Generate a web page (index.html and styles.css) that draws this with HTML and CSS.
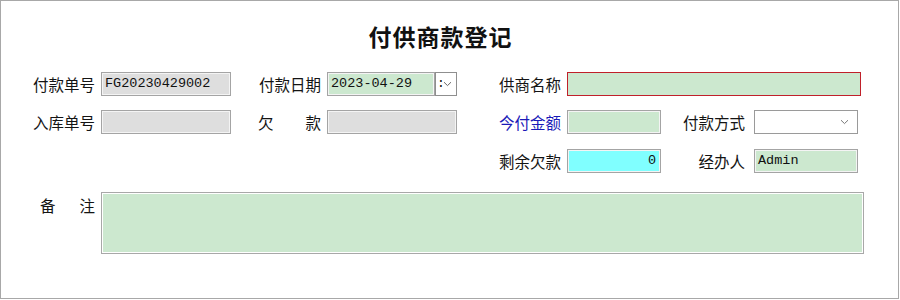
FILE: index.html
```html
<!DOCTYPE html>
<html lang="zh">
<head>
<meta charset="utf-8">
<title>付供商款登记</title>
<link rel="stylesheet" href="styles.css">
</head>
<body>
<div class="window">
  <div class="title">付供商款登记</div>
  <div class="form">
    <div class="row">
      <div class="lbl">付款单号</div>
      <div class="box grey w130">FG20230429002</div>
      <div class="lbl col2">付款日期</div>
      <div class="box green w108">2023-04-29</div>
      <div class="dropbtn"><span class="colon">:</span><svg width="9" height="6" viewBox="0 0 9 6"><path d="M1 1.2 L4.5 4.6 L8 1.2" fill="none" stroke="#666" stroke-width="1"/></svg></div>
      <div class="lbl w64 col3">供商名称</div>
      <div class="box green red w294"></div>
    </div>
    <div class="row r2">
      <div class="lbl">入库单号</div>
      <div class="box grey w130"></div>
      <div class="lbl col2 split"><span>欠</span><span>款</span></div>
      <div class="box grey w130"></div>
      <div class="lbl w64 col3 blue">今付金额</div>
      <div class="box green w94"></div>
      <div class="lbl w64 col4">付款方式</div>
      <div class="box select w104"><svg width="9" height="6" viewBox="0 0 9 6"><path d="M1 1.2 L4.5 4.6 L8 1.2" fill="none" stroke="#777" stroke-width="1"/></svg></div>
    </div>
    <div class="row r3">
      <div class="lbl w64 skip">剩余欠款</div>
      <div class="box cyan w94 num">0</div>
      <div class="lbl w64 col4">经办人</div>
      <div class="box green w104">Admin</div>
    </div>
    <div class="row r4">
      <div class="lbl note"><span>备</span><span>注</span></div>
      <div class="box green memo"></div>
    </div>
  </div>
</div>
</body>
</html>
```
FILE: styles.css
```css
html, body {
  margin: 0;
  padding: 0;
  background: #ffffff;
}

.window {
  width: 899px;
  height: 299px;
  box-sizing: border-box;
  border: 1px solid #a8a8a8;
  background: #ffffff;
  font-family: "Noto Sans CJK SC", "Liberation Sans", sans-serif;
  color: #111;
}

.title {
  margin-top: 23px;
  padding-right: 18px;
  height: 24px;
  line-height: 24px;
  font-size: 23px;
  font-weight: 700;
  text-align: center;
  letter-spacing: 1px;
  color: #111;
}

.form {
  margin-top: 24px;
  padding-left: 31px;
}

.row {
  display: flex;
  align-items: center;
  height: 24px;
}

.row.r2 { margin-top: 14px; }
.row.r3 { margin-top: 15px; }
.row.r4 {
  margin-top: 19px;
  align-items: flex-start;
  height: auto;
}

.lbl {
  width: 63px;
  flex: none;
  font-size: 15.5px;
  line-height: 24px;
  text-align: right;
  white-space: nowrap;
  color: #141414;
}

.lbl.w64 { width: 64px; }
.lbl.col2 { margin-left: 27px; }
.lbl.col3 { margin-left: 40px; }
.lbl.col4 { margin-left: 20px; }
.lbl.skip { margin-left: 465px; }
.lbl.blue { color: #1a1ab8; }

.lbl.split {
  display: flex;
  justify-content: space-between;
}

.lbl.note {
  display: flex;
  justify-content: space-between;
  box-sizing: border-box;
  padding-left: 8px;
  margin-top: 1px;
}

.box {
  flex: none;
  box-sizing: border-box;
  height: 24px;
  margin-left: 6px;
  border: 1px solid #a4a4a4;
  box-shadow: inset 0 0 0 1px #f4f4f4;
  padding: 0 3px;
  font-family: "Liberation Mono", "DejaVu Sans Mono", monospace;
  font-size: 13.5px;
  line-height: 22px;
  color: #111;
  white-space: nowrap;
  overflow: hidden;
}

.col4 + .box { margin-left: 9px; }

.w94 { width: 94px; }
.w104 { width: 104px; }
.w108 { width: 108px; }
.w130 { width: 130px; }
.w294 { width: 294px; }

.grey { background: #dedede; }
.green { background: #cce8cf; }
.cyan { background: #80ffff; }

.red {
  border-color: #c0202a;
  box-shadow: none;
}

.num { text-align: right; padding-right: 4px; }

.select {
  background: #ffffff;
  display: flex;
  align-items: center;
  justify-content: flex-end;
  padding-right: 8px;
  border-color: #9a9a9a;
  box-shadow: none;
}

.dropbtn {
  flex: none;
  box-sizing: border-box;
  width: 22px;
  height: 24px;
  border: 1px solid #8f8f8f;
  background: #ffffff;
  display: flex;
  align-items: center;
  padding-left: 1px;
  gap: 2px;
}

.dropbtn .colon {
  font-family: "Liberation Mono", monospace;
  font-size: 13px;
  line-height: 20px;
  color: #111;
  width: 4px;
}

.memo {
  width: 763px;
  height: 62px;
  border-color: #a8a8a8;
  box-shadow: inset 0 0 0 1px #ffffff;
}
```
